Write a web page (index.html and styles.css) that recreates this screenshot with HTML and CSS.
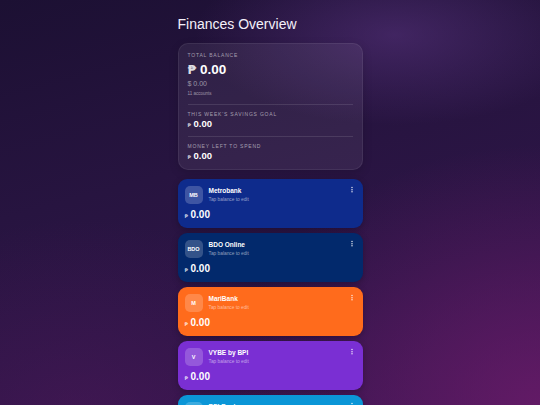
FILE: index.html
```html
<!DOCTYPE html>
<html lang="en">
<head>
<meta charset="utf-8">
<title>Finances Overview</title>
<link rel="stylesheet" href="styles.css">
</head>
<body>
<main class="page">
  <h1 class="title">Finances Overview</h1>

  <section class="summary">
    <div class="sum-section first">
      <div class="label">TOTAL BALANCE</div>
      <div class="total"><span class="peso-lg">₱</span> 0.00</div>
      <div class="usd">$ 0.00</div>
      <div class="count">11 accounts</div>
    </div>
    <div class="sum-section">
      <div class="label">THIS WEEK'S SAVINGS GOAL</div>
      <div class="amount"><span class="peso-sm">₱</span>0.00</div>
    </div>
    <div class="sum-section last">
      <div class="label">MONEY LEFT TO SPEND</div>
      <div class="amount"><span class="peso-sm">₱</span>0.00</div>
    </div>
  </section>

  <section class="accounts">
    <article class="acct metrobank">
      <div class="acct-top">
        <div class="avatar">MB</div>
        <div class="acct-info">
          <div class="acct-name">Metrobank</div>
          <div class="acct-hint">Tap balance to edit</div>
        </div>
        <button class="menu" aria-label="More"><svg viewBox="0 0 8 8" width="8" height="8"><circle cx="4" cy="1.6" r="0.75"/><circle cx="4" cy="3.7" r="0.75"/><circle cx="4" cy="5.8" r="0.75"/></svg></button>
      </div>
      <div class="acct-bal"><span class="peso-sm">₱</span>0.00</div>
    </article>

    <article class="acct bdo">
      <div class="acct-top">
        <div class="avatar">BDO</div>
        <div class="acct-info">
          <div class="acct-name">BDO Online</div>
          <div class="acct-hint">Tap balance to edit</div>
        </div>
        <button class="menu" aria-label="More"><svg viewBox="0 0 8 8" width="8" height="8"><circle cx="4" cy="1.6" r="0.75"/><circle cx="4" cy="3.7" r="0.75"/><circle cx="4" cy="5.8" r="0.75"/></svg></button>
      </div>
      <div class="acct-bal"><span class="peso-sm">₱</span>0.00</div>
    </article>

    <article class="acct maribank">
      <div class="acct-top">
        <div class="avatar">M</div>
        <div class="acct-info">
          <div class="acct-name">MariBank</div>
          <div class="acct-hint">Tap balance to edit</div>
        </div>
        <button class="menu" aria-label="More"><svg viewBox="0 0 8 8" width="8" height="8"><circle cx="4" cy="1.6" r="0.75"/><circle cx="4" cy="3.7" r="0.75"/><circle cx="4" cy="5.8" r="0.75"/></svg></button>
      </div>
      <div class="acct-bal"><span class="peso-sm">₱</span>0.00</div>
    </article>

    <article class="acct vybe">
      <div class="acct-top">
        <div class="avatar">V</div>
        <div class="acct-info">
          <div class="acct-name">VYBE by BPI</div>
          <div class="acct-hint">Tap balance to edit</div>
        </div>
        <button class="menu" aria-label="More"><svg viewBox="0 0 8 8" width="8" height="8"><circle cx="4" cy="1.6" r="0.75"/><circle cx="4" cy="3.7" r="0.75"/><circle cx="4" cy="5.8" r="0.75"/></svg></button>
      </div>
      <div class="acct-bal"><span class="peso-sm">₱</span>0.00</div>
    </article>

    <article class="acct bpi">
      <div class="acct-top">
        <div class="avatar">B</div>
        <div class="acct-info">
          <div class="acct-name">BPI Bank</div>
          <div class="acct-hint">Tap balance to edit</div>
        </div>
        <button class="menu" aria-label="More"><svg viewBox="0 0 8 8" width="8" height="8"><circle cx="4" cy="1.6" r="0.75"/><circle cx="4" cy="3.7" r="0.75"/><circle cx="4" cy="5.8" r="0.75"/></svg></button>
      </div>
      <div class="acct-bal"><span class="peso-sm">₱</span>0.00</div>
    </article>
  </section>
</main>
</body>
</html>
```

FILE: styles.css
```css
* { box-sizing: border-box; }

html, body { margin: 0; padding: 0; }

body {
  height: 100vh;
  overflow: hidden;
  font-family: "Liberation Sans", Arial, sans-serif;
  color: #fff;
  background:
    radial-gradient(ellipse 200px 90px at 395px 35px, rgba(95, 55, 135, 0.5), transparent),
    radial-gradient(ellipse 320px 260px at 540px 405px, rgba(115, 28, 110, 0.7), transparent),
    radial-gradient(ellipse 260px 200px at 80px 420px, rgba(80, 25, 90, 0.45), transparent),
    linear-gradient(165deg, #1c1033 0%, #271440 40%, #2e1548 70%, #3a1652 100%);
}

.page {
  width: 185px;
  margin: 0 auto;
  padding-top: 15px;
}

.title {
  margin: 0 0 10px;
  font-size: 14px;
  line-height: 18px;
  font-weight: 400;
  color: #f4f0fa;
}

/* Summary card */
.summary {
  border-radius: 10px;
  padding: 9px 9px 8px;
  background: rgba(255, 255, 255, 0.065);
  border: 1px solid rgba(255, 255, 255, 0.07);
  box-shadow: 0 3px 10px rgba(0, 0, 0, 0.15);
}

.sum-section {
  padding: 6px 0 7px;
  border-top: 1px solid rgba(255, 255, 255, 0.11);
}
.sum-section.first { padding-top: 0; border-top: 0; margin-top: -1px; }
.sum-section.last { padding-bottom: 0; }

.label {
  font-size: 5px;
  line-height: 7px;
  letter-spacing: 0.8px;
  color: rgba(255, 255, 255, 0.55);
}

.total {
  margin-top: 3px;
  font-size: 13.5px;
  line-height: 15px;
  font-weight: 700;
}
.peso-lg {
  line-height: 0;
  color: rgba(255, 255, 255, 0.85);
  font-family: "DejaVu Sans", sans-serif;
  font-size: 12.5px;
}

.usd {
  margin-top: 2px;
  font-size: 7px;
  line-height: 9px;
  color: rgba(255, 255, 255, 0.5);
}

.count {
  margin-top: 2px;
  font-size: 4.5px;
  line-height: 7px;
  color: rgba(255, 255, 255, 0.5);
}

.amount {
  font-size: 9.5px;
  line-height: 11px;
  font-weight: 700;
}

.peso-sm {
  line-height: 0;
  font-size: 5px;
  font-weight: 700;
  margin-right: 2.5px;
  color: rgba(255, 255, 255, 0.75);
  font-family: "DejaVu Sans", sans-serif;
}

/* Accounts */
.accounts {
  display: flex;
  flex-direction: column;
  gap: 5.5px;
  margin-top: 9px;
}

.acct {
  border-radius: 9px;
  padding: 7px;
  box-shadow: 0 2px 6px rgba(0, 0, 0, 0.25);
}
.metrobank { background: #0e2b8c; }
.bdo { background: #02296c; }
.maribank { background: #ff6b1c; }
.vybe { background: #7a2fd3; }
.bpi { background: #0b96d7; }

.acct-top {
  display: flex;
  align-items: flex-start;
  gap: 6px;
}

.avatar {
  width: 18px;
  height: 18px;
  flex: none;
  border-radius: 5px;
  background: rgba(255, 255, 255, 0.2);
  display: flex;
  align-items: center;
  justify-content: center;
  font-size: 5.5px;
  font-weight: 700;
}

.acct-info { flex: 1; padding-top: 1px; }

.acct-name {
  font-size: 6.5px;
  line-height: 8px;
  font-weight: 700;
}

.acct-hint {
  margin-top: 1px;
  font-size: 4.8px;
  line-height: 7px;
  color: rgba(255, 255, 255, 0.55);
}

.menu {
  flex: none;
  width: 8px;
  height: 8px;
  padding: 0;
  border: 0;
  background: none;
  display: flex;
}
.menu svg { fill: rgba(255, 255, 255, 0.85); }

.acct-bal {
  margin-top: 4.5px;
  font-size: 10px;
  line-height: 12px;
  font-weight: 700;
}
```
